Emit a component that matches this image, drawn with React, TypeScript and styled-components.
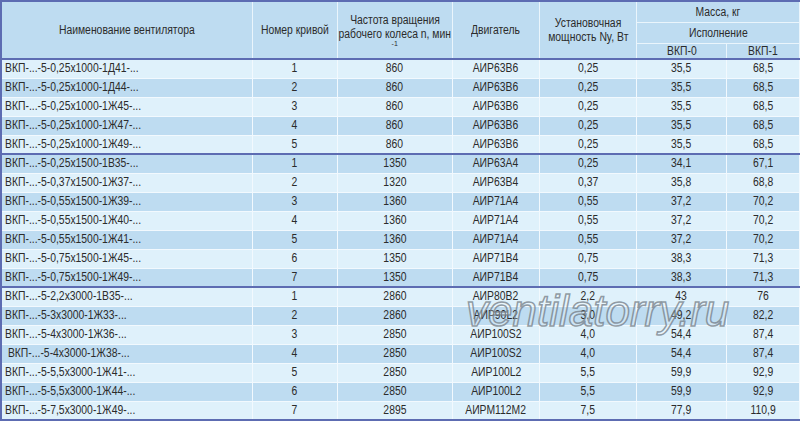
import React from "react";
import styled, { createGlobalStyle } from "styled-components";

const Global = createGlobalStyle`
  html, body { margin: 0; padding: 0; background: #ffffff; }
  body { width: 800px; height: 424px; overflow: hidden; }
`;

const Wrap = styled.div`
  position: relative;
  width: 800px;
  height: 424px;
  overflow: hidden;
  font-family: "Liberation Sans", Arial, sans-serif;
  font-size: 12.5px;
  color: #2b2b2b;
`;

const Table = styled.table`
  width: 800px;
  border-collapse: collapse;
  table-layout: fixed;
  border-top: 2px solid #5d6cb2;
  border-left: 2px solid #5d6cb2;
  border-bottom: 2px solid #5d6cb2;
`;

const Thead = styled.thead`
  border-bottom: 2px solid #5d6cb2;
`;

const Th = styled.th<{ $h?: number }>`
  background: #bedcf1;
  font-weight: normal;
  vertical-align: middle;
  padding: 0;
  line-height: 14px;
  border: 1px solid #eaf5fc;
  ${(p) => (p.$h ? `height: ${p.$h}px;` : "")}
`;

const HeadStack = styled.div`
  display: flex;
  flex-direction: column;
  align-items: center;
  justify-content: center;
`;

const Cond = styled.span<{ $left?: boolean }>`
  display: inline-block;
  white-space: pre;
  transform: scaleX(0.83);
  transform-origin: ${(p) => (p.$left ? "left center" : "center center")};
`;

const Sup = styled.span`
  display: block;
  font-size: 7px;
  line-height: 8px;
  margin-top: -1px;
`;

const Row = styled.tr<{ $dark: boolean; $groupStart: boolean }>`
  height: 19px;
  background: ${(p) => (p.$dark ? "#bedcf1" : "#dff1fb")};
  ${(p) => (p.$groupStart ? "td { border-top: 2px solid #5d6cb2; }" : "")}
`;

const Td = styled.td<{ $left?: boolean }>`
  padding: 0 0 1px;
  padding-left: ${(p) => (p.$left ? "3px" : "0")};
  text-align: ${(p) => (p.$left ? "left" : "center")};
  white-space: nowrap;
  line-height: 16px;
  border: 1px solid #f2f9fe;
`;

const Watermark = styled.div`
  position: absolute;
  left: 466px;
  top: 286px;
  font-family: "Liberation Sans", Arial, sans-serif;
  font-style: italic;
  font-size: 44px;
  letter-spacing: 0px;
  color: rgba(255, 255, 255, 0.25);
  -webkit-text-stroke: 1.5px rgba(115, 125, 135, 0.75);
  pointer-events: none;
  white-space: nowrap;
`;

type R = [string, string, string, string, string, string, string];

const groups: R[][] = [
  [
    ["ВКП-...-5-0,25x1000-1Д41-...", "1", "860", "АИР63В6", "0,25", "35,5", "68,5"],
    ["ВКП-...-5-0,25x1000-1Д44-...", "2", "860", "АИР63В6", "0,25", "35,5", "68,5"],
    ["ВКП-...-5-0,25x1000-1Ж45-...", "3", "860", "АИР63В6", "0,25", "35,5", "68,5"],
    ["ВКП-...-5-0,25x1000-1Ж47-...", "4", "860", "АИР63В6", "0,25", "35,5", "68,5"],
    ["ВКП-...-5-0,25x1000-1Ж49-...", "5", "860", "АИР63В6", "0,25", "35,5", "68,5"],
  ],
  [
    ["ВКП-...-5-0,25x1500-1В35-...", "1", "1350", "АИР63А4", "0,25", "34,1", "67,1"],
    ["ВКП-...-5-0,37x1500-1Ж37-...", "2", "1320", "АИР63В4", "0,37", "35,8", "68,8"],
    ["ВКП-...-5-0,55x1500-1Ж39-...", "3", "1360", "АИР71А4", "0,55", "37,2", "70,2"],
    ["ВКП-...-5-0,55x1500-1Ж40-...", "4", "1360", "АИР71А4", "0,55", "37,2", "70,2"],
    ["ВКП-...-5-0,55x1500-1Ж41-...", "5", "1360", "АИР71А4", "0,55", "37,2", "70,2"],
    ["ВКП-...-5-0,75x1500-1Ж45-...", "6", "1350", "АИР71В4", "0,75", "38,3", "71,3"],
    ["ВКП-...-5-0,75x1500-1Ж49-...", "7", "1350", "АИР71В4", "0,75", "38,3", "71,3"],
  ],
  [
    ["ВКП-...-5-2,2x3000-1В35-...", "1", "2860", "АИР80В2", "2,2", "43", "76"],
    ["ВКП-...-5-3x3000-1Ж33-...", "2", "2860", "АИР90L2", "3,0", "49,2", "82,2"],
    ["ВКП-...-5-4x3000-1Ж36-...", "3", "2850", "АИР100S2", "4,0", "54,4", "87,4"],
    [" ВКП-...-5-4x3000-1Ж38-...", "4", "2850", "АИР100S2", "4,0", "54,4", "87,4"],
    ["ВКП-...-5-5,5x3000-1Ж41-...", "5", "2850", "АИР100L2", "5,5", "59,9", "92,9"],
    ["ВКП-...-5-5,5x3000-1Ж44-...", "6", "2850", "АИР100L2", "5,5", "59,9", "92,9"],
    ["ВКП-...-5-7,5x3000-1Ж49-...", "7", "2895", "АИРМ112М2", "7,5", "77,9", "110,9"],
  ],
];

const widths = [251, 85, 115, 87, 97, 90, 73];

const HeadText = ({ lines, sup }: { lines: string[]; sup?: string }) => (
  <HeadStack>
    {lines.map((l, i) => (
      <Cond key={i}>{l}</Cond>
    ))}
    {sup ? <Sup>{sup}</Sup> : null}
  </HeadStack>
);

export default function App() {
  let idx = 0;
  return (
    <Wrap>
      <Global />
      <Table>
        <colgroup>
          {widths.map((w, i) => (
            <col key={i} style={{ width: w }} />
          ))}
        </colgroup>
        <Thead>
          <tr>
            <Th rowSpan={3}>
              <HeadText lines={["Наименование вентилятора"]} />
            </Th>
            <Th rowSpan={3}>
              <HeadText lines={["Номер кривой"]} />
            </Th>
            <Th rowSpan={3}>
              <HeadText lines={["Частота вращения", "рабочего колеса n, мин"]} sup="-1" />
            </Th>
            <Th rowSpan={3}>
              <HeadText lines={["Двигатель"]} />
            </Th>
            <Th rowSpan={3}>
              <HeadText lines={["Установочная", "мощность Ny, Вт"]} />
            </Th>
            <Th colSpan={2} $h={20}>
              <HeadText lines={["Масса, кг"]} />
            </Th>
          </tr>
          <tr>
            <Th colSpan={2} $h={20}>
              <HeadText lines={["Исполнение"]} />
            </Th>
          </tr>
          <tr>
            <Th $h={13}>
              <HeadText lines={["ВКП-0"]} />
            </Th>
            <Th $h={13}>
              <HeadText lines={["ВКП-1"]} />
            </Th>
          </tr>
        </Thead>
        <tbody>
          {groups.map((g, gi) =>
            g.map((r, ri) => {
              const dark = idx % 2 === 1;
              idx++;
              return (
                <Row key={`${gi}-${ri}`} $dark={dark} $groupStart={gi > 0 && ri === 0}>
                  {r.map((c, ci) => (
                    <Td key={ci} $left={ci === 0}>
                      <Cond $left={ci === 0}>{c}</Cond>
                    </Td>
                  ))}
                </Row>
              );
            })
          )}
        </tbody>
      </Table>
      <Watermark>ventilatorry.ru</Watermark>
    </Wrap>
  );
}
